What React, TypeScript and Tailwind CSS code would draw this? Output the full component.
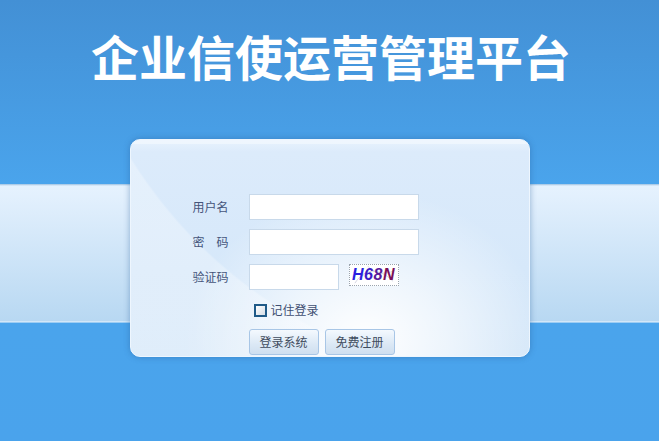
import React from "react";

const FONT = "font-['Noto_Sans_CJK_SC','Noto_Sans',sans-serif]";

function Captcha() {
  return (
    <div className="relative w-[50px] h-[22px] border border-dotted border-[#9aa4ae] bg-white overflow-hidden">
      <svg viewBox="0 0 50 22" className="absolute inset-0 w-full h-full">
        <path d="M4 20 C14 4, 30 2, 46 18" stroke="#c8c8d8" strokeWidth="0.8" fill="none" />
        <path d="M18 1 C24 8, 34 12, 48 6" stroke="#d0d0dc" strokeWidth="0.8" fill="none" />
        <path d="M2 8 L20 14" stroke="#d4d4e0" strokeWidth="0.7" fill="none" />
      </svg>
      <div className="relative flex h-full items-center justify-center font-['Liberation_Sans',sans-serif] italic font-bold text-[16px] leading-none tracking-[0.5px]">
        <span className="text-[#2a1ee0]">H</span>
        <span className="text-[#3a1cc8]">6</span>
        <span className="text-[#5a1a9a]">8</span>
        <span className="text-[#7a1058]">N</span>
      </div>
    </div>
  );
}

function Row({ label, children }: { label: string; children: React.ReactNode }) {
  return (
    <div className="flex items-center h-[26px]">
      <div className="w-[56px] text-[12px] leading-none text-[#45557a]">{label}</div>
      {children}
    </div>
  );
}

function Button({ children }: { children: React.ReactNode }) {
  return (
    <button className="w-[70px] h-[26px] rounded-[3px] border border-[#a8c6e6] bg-[linear-gradient(to_bottom,#f4f9fe,#dbe8f5_60%,#cfdff0)] text-[12px] leading-none text-[#3f4c5e]">
      {children}
    </button>
  );
}

export default function App() {
  return (
    <div
      className={`${FONT} w-full h-[441px] overflow-hidden bg-[linear-gradient(to_bottom,#4390d5_0px,#4aa4ec_184px,#9cc0e0_184px,#e6f2fe_186px,#b8d8f2_321px,#eef6fd_322px,#4aa4ec_323px,#4aa3ec_100%)]`}
    >
      <h1 className="pt-[31px] pl-[3px] h-[139px] text-center text-white font-bold text-[48px] leading-[48px]">
        企业信使运营管理平台
      </h1>

      <div className="mx-auto w-[400px] h-[218px] rounded-[10px] shadow-[0_0_6px_rgba(40,90,150,0.45)] border border-[#eef6fe] overflow-hidden bg-[radial-gradient(circle_at_400px_-230px,transparent_470px,rgba(255,255,255,0.28)_472px),radial-gradient(ellipse_180px_150px_at_235px_200px,#ffffff_0%,rgba(255,255,255,0.6)_45%,rgba(255,255,255,0)_100%),linear-gradient(to_bottom,#e8f2fd_0px,#dcebfb_12px,#d6e8fa_60%,#d3e6f8_100%)]">
        <div className="h-[4px] bg-[#f2f8fe]/70" />
        <div className="flex flex-col gap-[9px] pl-[62px] pt-[50px]">
          <Row label="用户名">
            <input className="w-[170px] h-[26px] border border-[#c8d9ea] bg-white outline-none" />
          </Row>
          <Row label="密　码">
            <input type="password" className="w-[170px] h-[26px] border border-[#c8d9ea] bg-white outline-none" />
          </Row>
          <Row label="验证码">
            <input className="w-[90px] h-[26px] border border-[#c8d9ea] bg-white outline-none" />
            <div className="ml-[10px] self-start">
              <Captcha />
            </div>
          </Row>
        </div>
        <div className="flex items-center h-[16px] mt-[12px] pl-[123px]">
          <span className="w-[13px] h-[13px] border-2 border-[#1f5a88] bg-[linear-gradient(135deg,#ffffff,#d4dde6)]" />
          <span className="ml-[4px] text-[12px] leading-none text-[#3f4f72]">记住登录</span>
        </div>
        <div className="flex gap-[6px] pl-[118px] mt-[11px]">
          <Button>登录系统</Button>
          <Button>免费注册</Button>
        </div>
      </div>
    </div>
  );
}
